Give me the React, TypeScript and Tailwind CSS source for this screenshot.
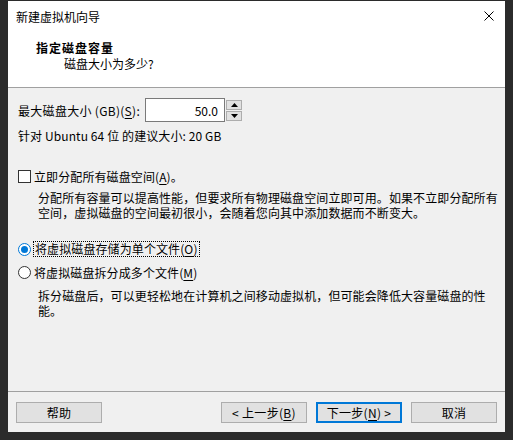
const U = ({ c }: { c: string }) => (
  <span className="underline underline-offset-[2px]">{c}</span>
);

function Btn({ children, primary }: { children: React.ReactNode; primary?: boolean }) {
  return (
    <button
      className={
        primary
          ? "flex h-[21px] w-[86px] items-center justify-center border-2 border-[#0078d7] bg-[#e1e1e1] leading-none"
          : "flex h-[21px] w-[86px] items-center justify-center border border-[#adadad] bg-[#e1e1e1] leading-none"
      }
    >
      {children}
    </button>
  );
}

export default function App() {
  return (
    <div className="h-[440px] w-[513px] bg-[#2b2b2b] px-2 pb-2 pt-px font-[family-name:'Noto_Sans_CJK_SC',sans-serif] text-[12px] text-black">
      <div className="flex h-full flex-col bg-[#f0f0f0]">
        {/* title bar + header */}
        <div className="bg-white">
          <div className="flex h-[30px] items-center justify-between pl-2 pr-[10px]">
            <span className="leading-[15px]">新建虚拟机向导</span>
            <svg width="10" height="10" viewBox="0 0 10 10" className="mr-px">
              <path d="M0.5 0.5 L9.5 9.5 M9.5 0.5 L0.5 9.5" stroke="#000" strokeWidth="1" />
            </svg>
          </div>
          <div className="h-[56px] pt-[9px]">
            <div className="pl-[28px] font-bold leading-[15px] tracking-[1px]">指定磁盘容量</div>
            <div className="mt-px pl-[56px] leading-[15px]">磁盘大小为多少?</div>
          </div>
        </div>
        <div className="h-px bg-[#a0a0a0]" />

        {/* body */}
        <div className="flex flex-1 flex-col whitespace-nowrap pl-[10px] leading-[15px] tracking-[0.1px]">
          <div className="mt-[10px] flex h-[24px] items-center">
            <span className="w-[127px] tracking-[0.3px]">
              最大磁盘大小 (GB)(<U c="S" />):
            </span>
            <div className="flex h-[24px] w-[80px] items-center justify-end border border-[#7a7a7a] bg-white pr-[6px] tracking-normal">
              50.0
            </div>
            <div className="ml-px flex h-[21px] w-[16px] flex-col gap-px">
              <div className="flex flex-1 items-center justify-center border border-[#adadad] bg-[#e1e1e1]">
                <svg width="7" height="4" viewBox="0 0 7 4">
                  <path d="M0 4 L3.5 0 L7 4 Z" fill="#000" />
                </svg>
              </div>
              <div className="flex flex-1 items-center justify-center border border-[#adadad] bg-[#e1e1e1]">
                <svg width="7" height="4" viewBox="0 0 7 4">
                  <path d="M0 0 L3.5 4 L7 0 Z" fill="#000" />
                </svg>
              </div>
            </div>
          </div>
          <div className="mt-[6px]">针对 Ubuntu 64 位 的建议大小: 20 GB</div>

          <div className="mt-[26px] flex h-[15px] items-center">
            <span className="h-[13px] w-[13px] border border-[#333] bg-white" />
            <span className="ml-[3px]">
              立即分配所有磁盘空间(<U c="A" />)。
            </span>
          </div>
          <div className="mt-[6px] pl-[20px]">
            <div className="h-[15px]">分配所有容量可以提高性能，但要求所有物理磁盘空间立即可用。如果不立即分配所有</div>
            <div className="h-[15px]">空间，虚拟磁盘的空间最初很小，会随着您向其中添加数据而不断变大。</div>
          </div>

          <div className="mt-[21px] flex h-[16px] items-center">
            <span className="flex h-[13px] w-[13px] items-center justify-center rounded-full border border-[#0078d7] bg-white">
              <span className="h-[7px] w-[7px] rounded-full bg-[#0078d7]" />
            </span>
            <span className="ml-[2px] border border-dotted border-black px-px leading-[14px]">
              将虚拟磁盘存储为单个文件(<U c="O" />)
            </span>
          </div>
          <div className="mt-[8px] flex h-[15px] items-center">
            <span className="h-[13px] w-[13px] rounded-full border border-[#333] bg-white" />
            <span className="ml-[3px]">
              将虚拟磁盘拆分成多个文件(<U c="M" />)
            </span>
          </div>
          <div className="mt-[8px] pl-[20px]">
            <div className="h-[15px]">拆分磁盘后，可以更轻松地在计算机之间移动虚拟机，但可能会降低大容量磁盘的性</div>
            <div className="h-[15px]">能。</div>
          </div>
        </div>

        {/* footer */}
        <div className="h-px bg-[#a0a0a0]" />
        <div className="flex items-center gap-[9px] px-2 pb-[9px] pt-[10px] tracking-[0.3px]">
          <Btn>帮助</Btn>
          <div className="flex-1" />
          <Btn>
            &lt; 上一步(<U c="B" />)
          </Btn>
          <Btn primary>
            下一步(<U c="N" />) &gt;
          </Btn>
          <Btn>取消</Btn>
        </div>
      </div>
    </div>
  );
}
